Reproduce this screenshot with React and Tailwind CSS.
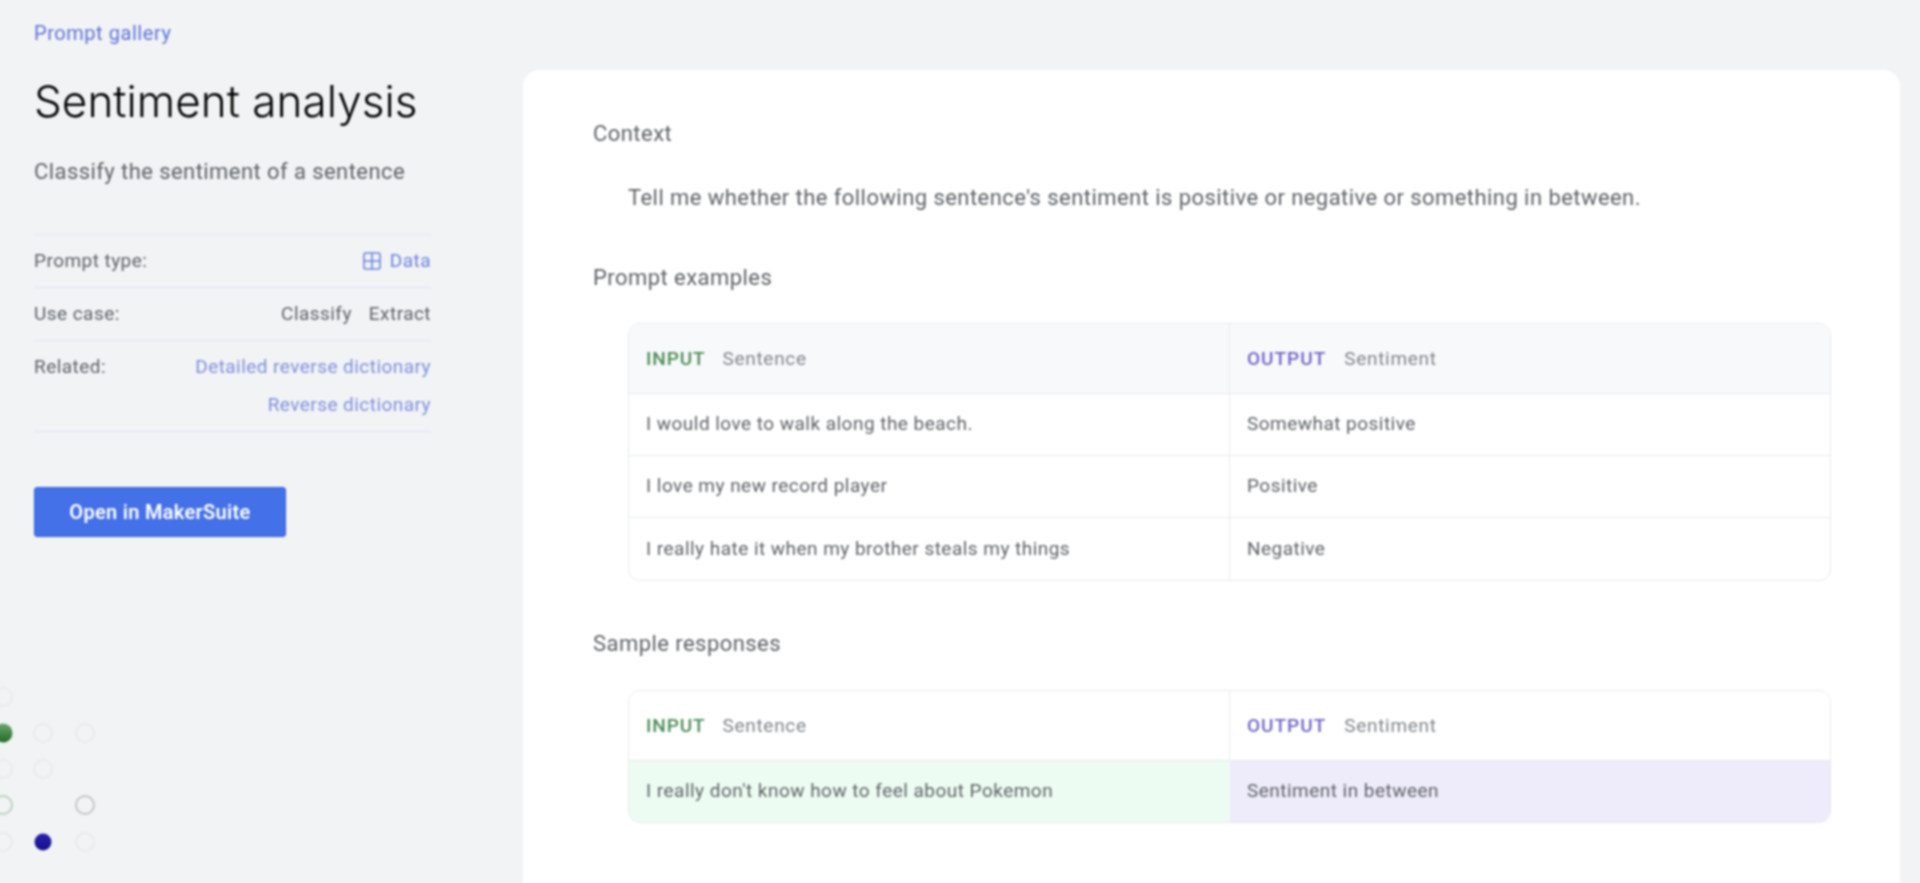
import React from 'react';

const rows = [
    ['I would love to walk along the beach.', 'Somewhat positive'],
    ['I love my new record player', 'Positive'],
    ['I really hate it when my brother steals my things', 'Negative'],
];

function TableHead({ tinted }) {
    const bg = tinted ? 'bg-[#f8f9fa]' : 'bg-white';
    return (
        <div className="flex h-[70px] border-b border-[#e8eaed] text-[19px] leading-6 tracking-[0.7px]">
            <div className={`flex w-[601px] items-center gap-[17px] border-r border-[#e8eaed] pl-[17px] ${bg}`}>
                <span className="font-medium tracking-[0.9px] text-[#4c8c57]">INPUT</span>
                <span className="text-[#80868b]">Sentence</span>
            </div>
            <div className={`flex flex-1 items-center gap-[18px] pl-[17px] ${bg}`}>
                <span className="font-medium tracking-[1px] text-[#7165cc]">OUTPUT</span>
                <span className="text-[#80868b]">Sentiment</span>
            </div>
        </div>
    );
}

function Dot({ x, y, className }) {
    return <div className={`absolute rounded-full ${className}`} style={{ left: x, top: y, transform: 'translate(-50%, -50%)' }} />;
}

export default function App() {
    return (
        <div className="h-screen overflow-hidden bg-[#f1f3f4]">
            <div className="relative flex h-[calc(100%+6px)] bg-[#f1f3f4] font-['Roboto',sans-serif] blur-[0.8px]">
                <aside className="w-[523px] shrink-0 px-[34px] pt-[21px]">
                    <a className="block text-[20px] leading-6 tracking-[0.55px] text-[#5f73d9]">Prompt gallery</a>
                    <h1 className="mt-[28px] font-['Inter',sans-serif] text-[44px] leading-[56px] font-light tracking-[0.05px] text-[#000000]">
                        Sentiment analysis
                    </h1>
                    <p className="mt-[29px] text-[22px] leading-7 tracking-[0.43px] text-[#5f6368]">Classify the sentiment of a sentence</p>

                    <div className="mt-[48px] w-[397px] border-y border-[#dfe5f5] text-[19px] tracking-[0.45px] text-[#5f6368]">
                        <div className="flex h-[53px] items-center justify-between border-b border-[#dfe5f5]">
                            <span>Prompt type:</span>
                            <span className="flex items-center gap-[9px] text-[#6f84de]">
                                <svg viewBox="0 0 18 18" className="size-[18px]" fill="none" stroke="currentColor" strokeWidth="1.6">
                                    <rect x="1" y="1" width="16" height="16" rx="1.5" />
                                    <path d="M9 1v16M1 9h16" />
                                </svg>
                                Data
                            </span>
                        </div>
                        <div className="flex h-[53px] items-center justify-between border-b border-[#dfe5f5]">
                            <span>Use case:</span>
                            <span className="flex gap-[17px]">
                                <span>Classify</span>
                                <span>Extract</span>
                            </span>
                        </div>
                        <div className="flex h-[90px] justify-between pt-[14px]">
                            <span className="leading-6">Related:</span>
                            <div className="flex flex-col items-end gap-[14px] leading-6 text-[#7f90e0]">
                                <a>Detailed reverse dictionary</a>
                                <a>Reverse dictionary</a>
                            </div>
                        </div>
                    </div>

                    <button className="mt-[55px] h-[50px] w-[252px] rounded-[3px] border border-[#3563e0] bg-[#4470e8] text-[20px] font-semibold tracking-[0.3px] text-white">
                        Open in MakerSuite
                    </button>
                </aside>

                <Dot x={3} y={697} className="size-[20px] border-2 border-[#e8eaed]" />
                <Dot x={3} y={733} className="size-[19px] bg-gradient-to-b from-[#6aa86e] to-[#1f6b25]" />
                <Dot x={43} y={733} className="size-[20px] border-2 border-[#e8eaed]" />
                <Dot x={85} y={733} className="size-[20px] border-2 border-[#e8eaed]" />
                <Dot x={3} y={769} className="size-[20px] border-2 border-[#e8eaed]" />
                <Dot x={43} y={769} className="size-[20px] border-2 border-[#e8eaed]" />
                <Dot x={3} y={805} className="size-[20px] border-2 border-[#bdd3bf]" />
                <Dot x={85} y={805} className="size-[20px] border-2 border-[#c4c7c9]" />
                <Dot x={3} y={842} className="size-[20px] border-2 border-[#e8eaed]" />
                <Dot x={43} y={842} className="size-[17px] bg-gradient-to-b from-[#2a22b0] to-[#14108a]" />
                <Dot x={85} y={842} className="size-[20px] border-2 border-[#e8eaed]" />

                <main className="mt-[70px] mr-[20px] flex-1 rounded-t-[16px] bg-white pt-[52px] pl-[70px] text-[#5f6368]">
                    <h2 className="text-[22px] leading-6 tracking-[0.45px]">Context</h2>
                    <p className="mt-[40px] pl-[35px] text-[22px] leading-6 tracking-[0.44px]">
                        Tell me whether the following sentence's sentiment is positive or negative or something in between.
                    </p>
                    <h2 className="mt-[56px] text-[22px] leading-6 tracking-[0.45px]">Prompt examples</h2>

                    <div className="mt-[33px] ml-[35px] w-[1203px] overflow-hidden rounded-[12px] border border-[#e8eaed]">
                        <TableHead tinted />
                        {rows.map(([input, output], i) => (
                            <div key={input} className={`flex h-[62px] text-[19px] tracking-[0.47px] ${i < 2 ? 'border-b border-[#e8eaed]' : ''}`}>
                                <div className="flex w-[601px] items-center border-r border-[#e8eaed] pl-[17px]">{input}</div>
                                <div className="flex flex-1 items-center pl-[17px]">{output}</div>
                            </div>
                        ))}
                    </div>

                    <h2 className="mt-[51px] text-[22px] leading-6 tracking-[0.45px]">Sample responses</h2>

                    <div className="mt-[34px] ml-[35px] w-[1203px] overflow-hidden rounded-[12px] border border-[#e8eaed]">
                        <TableHead />
                        <div className="flex h-[61px] text-[19px] tracking-[0.47px]">
                            <div className="flex w-[601px] items-center bg-[#edfcf2] pl-[17px]">I really don't know how to feel about Pokemon</div>
                            <div className="flex flex-1 items-center bg-[#eeebfb] pl-[17px]">Sentiment in between</div>
                        </div>
                    </div>
                </main>
            </div>
        </div>
    );
}
